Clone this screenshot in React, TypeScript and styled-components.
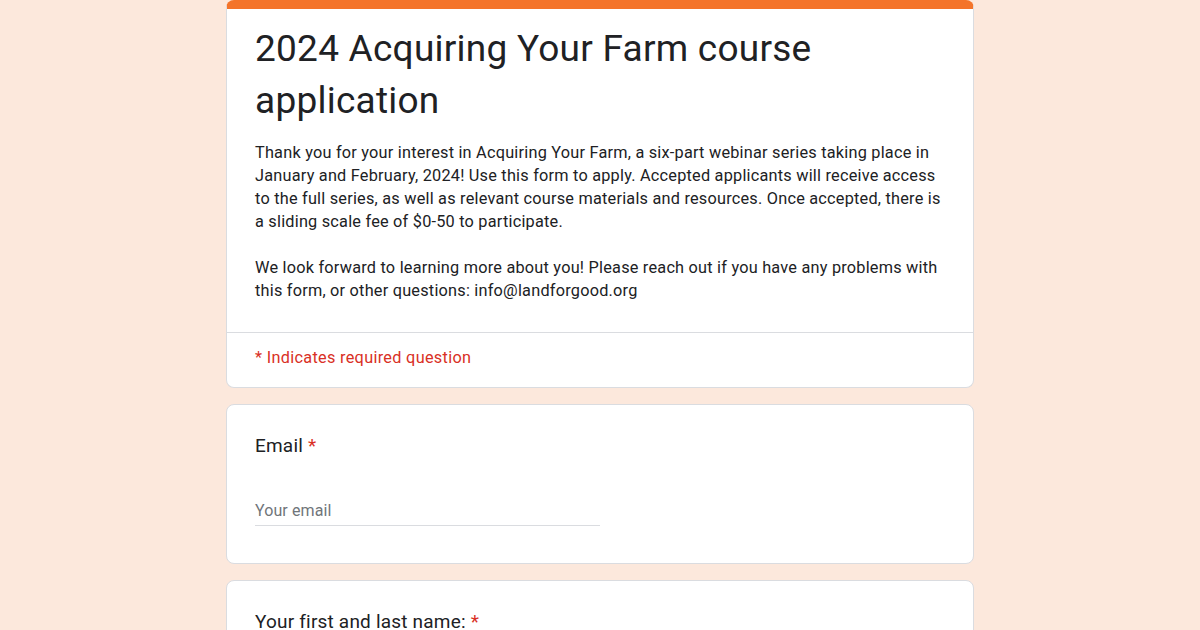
import React from 'react'
import styled, { createGlobalStyle } from 'styled-components'

const GlobalStyle = createGlobalStyle`
  html, body {
    margin: 0;
    padding: 0;
    background: #fce8dc;
  }
  body {
    font-family: Roboto, "Noto Sans", Arial, sans-serif;
    color: #202124;
  }
`

const Page = styled.div`
  display: flex;
  flex-direction: column;
  align-items: center;
  gap: 16px;
  padding-bottom: 40px;
`

const Card = styled.div<{ $top?: boolean }>`
  width: 748px;
  box-sizing: border-box;
  background: #fff;
  border: 1px solid #dadce0;
  border-radius: 8px;
  overflow: hidden;
  ${p => p.$top && `border-top: 9px solid #f4742a;`}
`

const Header = styled.div`
  padding: 14px 29px 30px 28px;
  border-bottom: 1px solid #dadce0;
`

const Title = styled.h1`
  margin: 0;
  font-family: Roboto, "Open Sans", sans-serif;
  font-weight: 400;
  font-size: 37px;
  line-height: 52px;
  color: #202124;
  letter-spacing: 0.25px;
`

const Description = styled.div`
  margin-top: 14px;
  font-size: 16.3px;
  line-height: 23px;
  letter-spacing: 0.22px;
  color: #202124;
  white-space: pre-wrap;
`

const Required = styled.div`
  padding: 14px 29px 18px 28px;
  font-size: 16.3px;
  line-height: 22px;
  letter-spacing: 0.3px;
  color: #d93025;
`

const Question = styled.div`
  padding: 27px 29px 37px 28px;
`

const Label = styled.div`
  font-size: 19px;
  line-height: 28px;
  letter-spacing: 0.2px;
  color: #202124;
`

const Star = styled.span`
  color: #d93025;
  margin-left: 5px;
`

const Input = styled.div`
  margin-top: 40px;
  width: 345px;
  font-size: 16px;
  line-height: 22px;
  letter-spacing: 0.1px;
  padding-bottom: 3px;
  color: #70757a;
  border-bottom: 1px solid #dadce0;
`

const App = () => {
  return (
    <>
      <GlobalStyle />
      <Page>
        <Card $top>
          <Header>
            <Title>2024 Acquiring Your Farm course application</Title>
            <Description>
              {`Thank you for your interest in Acquiring Your Farm, a six-part webinar series taking place in January and February, 2024! Use this form to apply. Accepted applicants will receive access to the full series, as well as relevant course materials and resources. Once accepted, there is a sliding scale fee of $0-50 to participate.

We look forward to learning more about you! Please reach out if you have any problems with this form, or other questions: info@landforgood.org`}
            </Description>
          </Header>
          <Required>* Indicates required question</Required>
        </Card>
        <Card>
          <Question>
            <Label>
              Email<Star>*</Star>
            </Label>
            <Input>Your email</Input>
          </Question>
        </Card>
        <Card>
          <Question>
            <Label>
              Your first and last name:<Star>*</Star>
            </Label>
            <Input>Your answer</Input>
          </Question>
        </Card>
      </Page>
    </>
  )
}

export default App
